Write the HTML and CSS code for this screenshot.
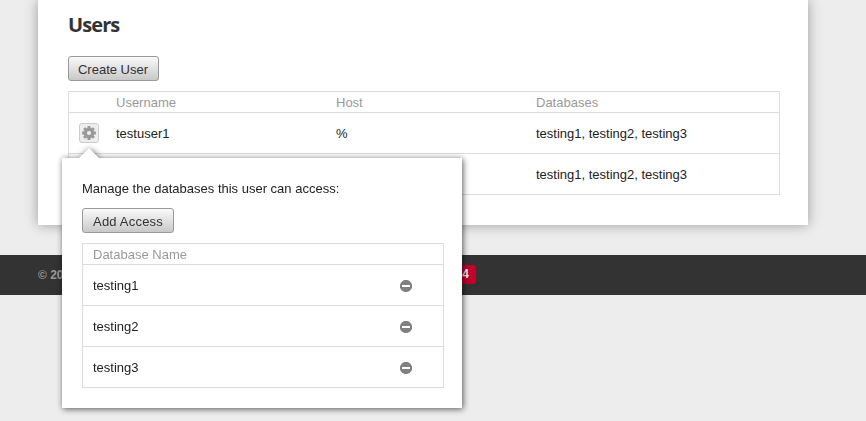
FILE: index.html
```
<!DOCTYPE html>
<html lang="en">
<head>
<meta charset="utf-8">
<title>Users</title>
<link rel="stylesheet" href="styles.css">
</head>
<body>
<main class="panel">
  <h2 class="title">Users</h2>
  <button class="btn btn-create">Create User</button>
  <div class="table">
    <div class="row head"><span></span><span>Username</span><span>Host</span><span>Databases</span></div>
    <div class="row">
      <div class="manage">
        <button class="gear" aria-label="Manage">
          <svg width="14" height="14" viewBox="-7 -7 14 14">
            <g fill="#999">
              <path id="tooth" d="M-1.4-6.9h2.8l.4 3h-3.6z"/>
              <use href="#tooth" transform="rotate(45)"/>
              <use href="#tooth" transform="rotate(90)"/>
              <use href="#tooth" transform="rotate(135)"/>
              <use href="#tooth" transform="rotate(180)"/>
              <use href="#tooth" transform="rotate(225)"/>
              <use href="#tooth" transform="rotate(270)"/>
              <use href="#tooth" transform="rotate(315)"/>
            </g>
            <circle r="3.6" fill="none" stroke="#999" stroke-width="3"/>
          </svg>
        </button>
        <div class="popover">
          <p class="hint">Manage the databases this user can access:</p>
          <button class="btn btn-add">Add Access</button>
          <div class="table">
            <div class="row access head"><span>Database Name</span></div>
            <div class="row access"><span>testing1</span><svg class="remove" viewBox="0 0 12 12"><circle cx="6" cy="6" r="6.1"/><path d="M2 5h8v2H2z"/></svg></div>
            <div class="row access"><span>testing2</span><svg class="remove" viewBox="0 0 12 12"><circle cx="6" cy="6" r="6.1"/><path d="M2 5h8v2H2z"/></svg></div>
            <div class="row access"><span>testing3</span><svg class="remove" viewBox="0 0 12 12"><circle cx="6" cy="6" r="6.1"/><path d="M2 5h8v2H2z"/></svg></div>
          </div>
        </div>
      </div>
      <span>testuser1</span><span>%</span><span>testing1, testing2, testing3</span>
    </div>
    <div class="row"><span></span><span></span><span></span><span>testing1, testing2, testing3</span></div>
  </div>
</main>
<footer class="footer"><span>© 20</span><b class="badge">4</b></footer>
</body>
</html>
```
FILE: styles.css
```
* { box-sizing: border-box; }
body {
  margin: 0;
  height: 421px;
  overflow: hidden;
  background: #ededed;
  color: #222;
  font: 13px/20px "Liberation Sans", Arial, sans-serif;
}
.panel {
  width: 770px;
  height: 225px;
  margin-left: 38px;
  padding: 10px 28px 0 30px;
  background: #fff;
  box-shadow: 0 0 12px rgba(0, 0, 0, .35);
}
.title {
  margin: 0 0 16px;
  color: #333;
  font: bold 20px/30px "Open Sans", sans-serif;
  letter-spacing: -.9px;
}
.btn {
  display: block;
  height: 25px;
  padding: 2px 0 0;
  border: 1px solid #999;
  border-radius: 3px;
  background: linear-gradient(#fafafa, #c8c8c8);
  color: #333;
  font: 13px/21px "Liberation Sans", Arial, sans-serif;
}
.btn-create {
  width: 91px;
  padding-right: 1px;
}
.btn-add {
  width: 92px;
  letter-spacing: .2px;
}
.btn + .table { margin-top: 10px; }
.table { border: 1px solid #dcdcdc; }
.row {
  display: grid;
  grid-template-columns: 47px 220px 200px 1fr;
  align-items: center;
  height: 41px;
}
.row > span { padding-top: 2px; }
.row + .row { border-top: 1px solid #dcdcdc; }
.row.head {
  height: 20px;
  color: #999;
}
.head > span { line-height: 18px; }
.panel > .table { width: 712px; }
.manage {
  position: relative;
  padding-left: 10px;
}
.gear {
  display: grid;
  place-items: center;
  width: 20px;
  height: 20px;
  padding: 0;
  border: 1px solid #ccc;
  border-radius: 3px;
  background: #eee;
}
.popover {
  position: absolute;
  z-index: 2;
  left: -7px;
  top: 35px;
  width: 400px;
  height: 250px;
  padding: 21px 18px 0 20px;
  background: #fff;
  filter: drop-shadow(1px 1px 3px rgba(0, 0, 0, .65));
}
.popover::before {
  content: "";
  position: absolute;
  left: 17px;
  top: -10px;
  border: solid transparent;
  border-width: 0 10px 10px;
  border-bottom-color: #fff;
}
.hint { margin: 0 0 9px; }
.row.access {
  grid-template-columns: 1fr 12px;
  padding: 0 31px 0 10px;
}
.remove {
  width: 12px;
  height: 12px;
  margin-top: 2px;
  fill: #808080;
}
.remove path { fill: #fff; }
.footer {
  display: flex;
  align-items: center;
  justify-content: space-between;
  width: 100%;
  height: 40px;
  margin-top: 30px;
  padding: 0 390px 1px 38px;
  background: #333;
  color: #999;
  font-size: 12px;
  font-weight: bold;
}
.badge {
  height: 19px;
  padding: 0 7px;
  border-radius: 3px;
  background: #c3002b;
  color: #eee;
  line-height: 19px;
}
```
